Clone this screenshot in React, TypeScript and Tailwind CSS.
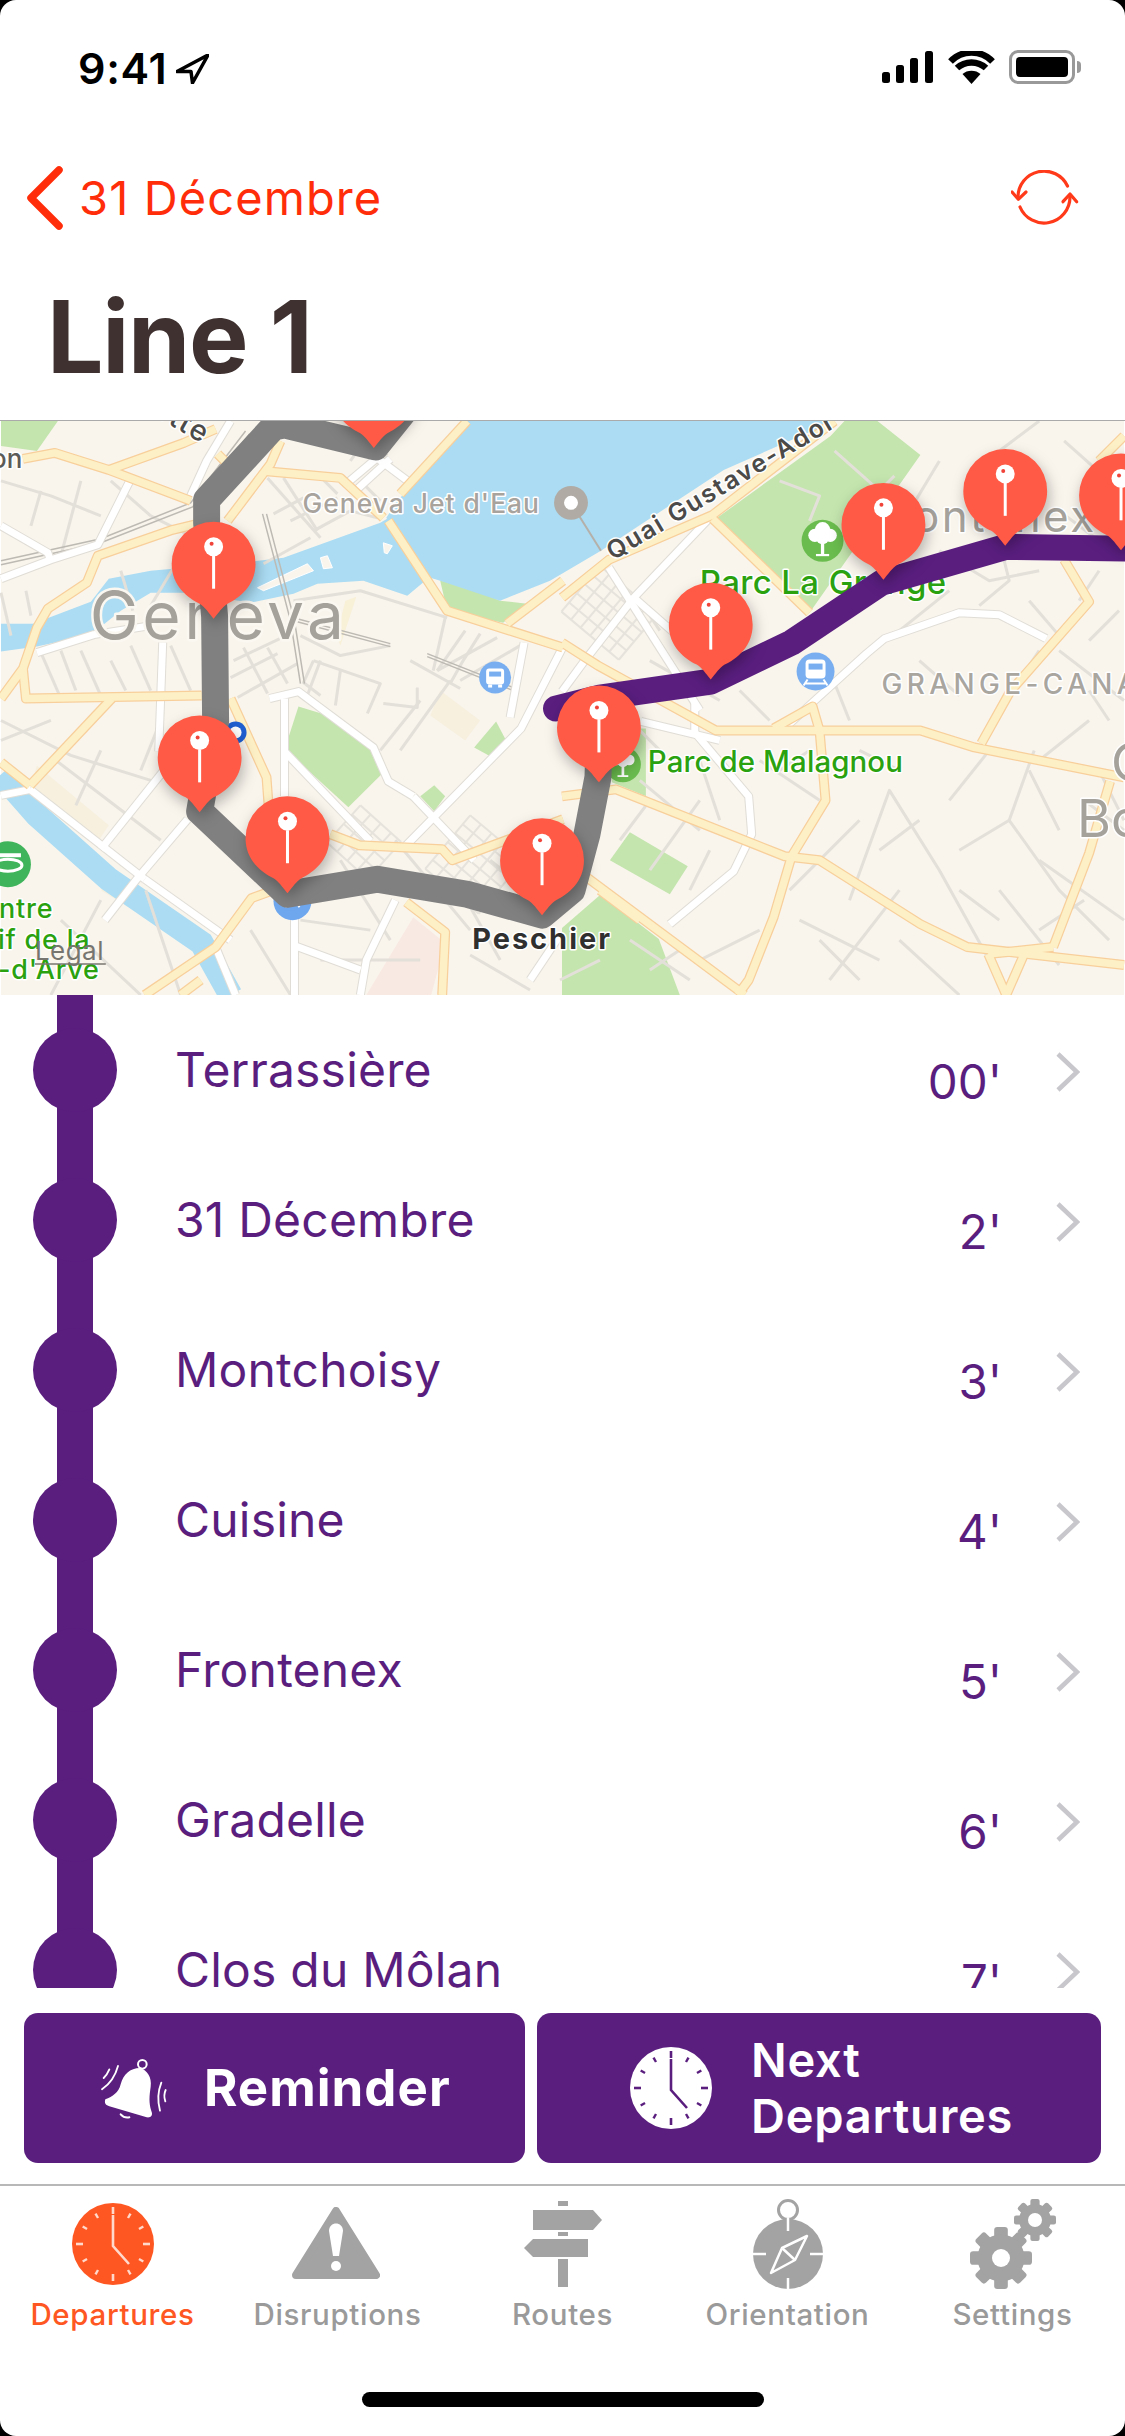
import React from "react";

const PURPLE = "#5a1e7f";
const ORANGE = "#ff5722";
const RED = "#ff2d0a";
const GREY = "#a3a3a3";

const yellowRoads = [
  "22,38 54,32 108,49 190,80", "108,49 183,22 215,8", "217,33 227,43",
  "0,278 22,248 36,207 47,188 86,162 97,135 172,109 201,102",
  "22,248 25,278 201,275", "111,278 29,365", "0,342 29,365",
  "227,100 270,43 280,20", "263,50 340,57 383,97", "388,100 447,190 563,227",
  "400,73 467,0", "507,203 563,160", "230,278 266,357 268,384",
  "330,414 359,425 442,429 452,440 563,399", "144,575 215,527 251,478 273,470",
  "406,482 445,512 442,575", "562,222 598,245 716,310 921,310 975,327 1125,357",
  "562,376 616,369 785,436 820,440 921,504 968,527 1125,545",
  "584,455 745,575", "774,308 813,286 820,310 826,380 792,436 774,497 749,560 738,575",
  "562,177 609,139 713,94 835,0", "713,98 810,192", "982,323 1011,271 1090,181 1065,139",
  "1111,361 1090,433 1054,527", "989,534 1007,575 1025,534", "1125,15 1100,40",
  "600,470 640,500", "200,560 180,575", "1054,527 989,534",
];

const whiteRoads = [
  "0,105 47,132 50,141", "0,158 50,139 97,124 129,60", "36,232 93,214 150,205",
  "269,278 298,271 373,327 388,361 413,376", "284,278 284,376", "284,331 370,421",
  "563,226 521,308 406,425", "524,222 510,297", "29,369 144,459", "100,429 172,339",
  "158,331 162,222", "187,399 136,459 104,500", "294,575 294,489", "413,376 474,440",
  "609,147 700,290", "634,177 706,240", "709,98 634,177 584,241 562,271",
  "1047,218 1000,194 960,192 885,218 867,233 813,282 788,305",
  "695,282 695,312 749,376 752,414 734,451 670,504", "641,301 720,320",
  "230,0 206,40 190,75", "347,62 385,30", "355,70 390,38", "378,38 410,62", "144,459 230,520",
  "395,480 366,540 360,575", "560,515 530,560", "295,526 360,550", "0,375 30,369",
  "215,527 235,575",
];

const greyStreets = [
  "0,60 50,75 100,95", "40,70 30,105", "110,60 150,95", "60,135 80,60", "150,95 190,115",
  "0,172 10,215", "25,170 30,195", "120,150 132,190", "180,135 150,185", "0,300 70,335 150,360",
  "60,230 75,270", "110,240 125,270", "40,232 60,278", "80,230 100,275", "130,225 150,270",
  "170,225 190,270", "0,320 50,300", "55,340 160,420", "100,330 75,385", "160,300 140,350",
  "283,57 317,110", "267,57 320,117", "317,53 337,73", "273,93 303,77", "290,100 337,77", "313,110 350,90 377,97",
  "263,143 310,117", "293,180 360,170 447,197", "313,240 380,263 367,293", "417,267 417,287 383,283",
  "497,217 437,250", "480,213 463,240 450,263", "465,210 437,250", "445,197 433,250", "233,240 290,213",
  "230,257 277,233", "237,277 297,243", "243,227 267,273", "267,227 287,263", "313,240 303,262 320,275", "340,250 335,285",
  "360,60 380,80", "350,40 372,10", "410,240 460,268",
  "300,215 340,235 390,225", "320,240 305,280", "420,280 380,330", "450,260 400,330", "460,260 520,225", "340,440 390,520", "395,420 470,510",
  "455,460 500,540", "300,500 370,510", "320,540 420,540", "470,535 530,570", "490,440 540,480",
  "520,420 560,460", "100,480 50,575", "60,500 140,575", "145,470 180,575", "250,510 290,575",
  "610,280 660,330", "650,240 720,280", "640,360 700,410", "620,420 650,380", "700,380 650,450",
  "690,470 710,430", "630,520 690,560", "700,540 760,510", "790,470 860,400", "800,500 880,540",
  "850,480 890,370 940,450 990,540", "830,560 900,470", "900,520 960,575", "960,430 1010,400 1060,470 1110,520",
  "1010,400 1035,330", "1040,340 1090,300", "990,330 950,380", "920,240 960,275", "1040,230 1000,290",
  "1060,230 1125,280", "1090,270 1110,300", "1000,120 1010,160 980,185", "1080,180 1100,150", "1065,20 1110,60",
  "1040,0 1000,30 1040,50", "1100,80 1125,70", "940,40 910,90", "835,30 880,70 895,55", "880,70 860,120",
  "780,60 820,75 810,100", "690,190 730,240", "640,180 660,210", "740,250 790,225", "740,270 770,300",
  "850,300 830,250", "1040,440 1125,500", "1000,470 1060,545", "1125,410 1085,380", "760,340 820,380",
  "700,340 720,400", "1030,350 1060,410", "1100,350 1125,400", "900,350 860,330", "920,400 880,430", "1000,500 960,470",
  "1040,510 1085,480", "560,560 600,540", "650,550 680,530", "820,520 860,560", "1060,90 1100,120", "940,130 990,160 1040,150",
  "950,170 900,210", "1030,180 1060,215", "1090,220 1120,190", "780,350 810,330",
];

const thinGrid = (x: number, y: number, w: number, h: number, a: number, nx: number, ny: number) => (
  <g transform={`translate(${x} ${y}) rotate(${a})`} stroke="#e6e3dc" strokeWidth="2" fill="none">
    {Array.from({ length: nx + 1 }, (_, i) => (
      <line key={`a${i}`} x1={(i * w) / nx} y1={0} x2={(i * w) / nx} y2={h} />
    ))}
    {Array.from({ length: ny + 1 }, (_, i) => (
      <line key={`b${i}`} x1={0} y1={(i * h) / ny} x2={w} y2={(i * h) / ny} />
    ))}
  </g>
);

const pins: [number, number][] = [
  [373.5, -28], [213, 143], [199, 337], [287, 418], [542, 440], [711, 204], [884, 104], [1006, 70], [1122, 74.5], [599, 307],
];

function Pin({ x, y }: { x: number; y: number }) {
  return (
    <g transform={`translate(${x} ${y})`}>
      <path d="M-42 0A42 42 0 0 1 42 0C42 22 26 34 14 40C9 43 5 49 0 55C-5 49 -9 43 -14 40C-26 34 -42 22 -42 0Z" fill="#ff5a45" style={{ filter: "drop-shadow(2px 6px 7px rgba(0,0,0,0.28))" }} />
      <rect x="-1.5" y="-8" width="3" height="33" fill="#fff" />
      <circle cx="0" cy="-17" r="9.5" fill="#fff" />
      <circle cx="-2" cy="-20" r="2" fill="#f0433a" />
    </g>
  );
}

function Poi({ x, y, r, fill, children }: { x: number; y: number; r: number; fill: string; children?: React.ReactNode }) {
  return (
    <g transform={`translate(${x} ${y})`}>
      <circle r={r} fill={fill} />
      {children}
    </g>
  );
}

const Tree = ({ s = 1 }: { s?: number }) => (
  <g transform={`scale(${s})`} fill="#fff">
    <circle cx="-7" cy="-5" r="6" /><circle cx="7" cy="-5" r="6" /><circle cx="0" cy="-10" r="7" /><circle cx="0" cy="-3" r="6" />
    <rect x="-1.5" y="-4" width="3" height="17" /><rect x="-6" y="12" width="12" height="2" />
  </g>
);

function MapView() {
  const hal = { stroke: "#fff", strokeWidth: 3, paintOrder: "stroke" as const, strokeLinejoin: "round" as const };
  return (
    <svg viewBox="0 0 1125 575" className="block w-full h-full">
      <rect width="1125" height="575" fill="#f9f5ed" />
      {/* land use */}
      <polygon points="100,470 108,459 220,530 215,540" fill="#f7f0df" />
      <polygon points="36,345 108,405 98,420 30,365" fill="#f7f0df" />
      <polygon points="440,270 480,300 465,320 430,295" fill="#f7f0df" />
      <polygon points="345,180 356,176 340,225 336,215" fill="#f9f0d8" />
      <polygon points="366,575 413,497 445,523 431,575" fill="#f9e9e3" />
      {/* parks */}
      <g fill="#c4e5ae">
        <polygon points="0,0 57,0 36,30 0,25" />
        <polygon points="298,286 287,320 287,331 348,387 381,354 373,327 334,297" />
        <polygon points="496,301 474,327 496,339 506,320" />
        <polygon points="434,365 420,376 434,391 445,376" />
        <polygon points="440,160 447,190 503,202 527,183 500,180 460,163" />
        <polygon points="878,0 921,34 810,192 716,98 774,56 831,15 845,0" />
        <polygon points="562,575 680,575 659,519 601,474 562,508" />
        <polygon points="630,412 688,446 670,474 610,440" />
        <polygon points="610,308 646,308 646,376 612,362" />
      </g>
      {/* water */}
      <g fill="#abdcf3">
        <polygon points="467,0 445,30 397,80 386,97 417,153 440,160 500,180 550,160 601,130 724,49 835,0" />
        <polygon points="0,203 32,203 90,181 108,158 150,150 250,141 283,137 380,102 392,95 425,160 407,175 363,160 317,163 293,173 250,182 190,172 150,172 120,190 90,214 36,226 0,231" />
      </g>
      <polyline points="0,354 36,395 108,459 201,523 230,575" fill="none" stroke="#abdcf3" strokeWidth="24" />
      <g fill="#f9f5ed" stroke="#ffffff" strokeWidth="1">
        <polygon points="257,167 307,143 313,150 263,170" />
        <polygon points="320,137 327,135 332,147 323,148" />
        <polygon points="383,122 392,125 387,133 384,132" />
      </g>
      {/* streets */}
      {thinGrid(470, 395, 70, 70, 40, 5, 6)}
      {thinGrid(600, 145, 75, 60, 40, 6, 5)}
      {thinGrid(360, 385, 55, 50, 42, 4, 4)}
      {greyStreets.map((p, i) => (
        <polyline key={i} points={p} fill="none" stroke="#e3e0d9" strokeWidth="3" strokeLinejoin="round" />
      ))}
      <g fill="none" stroke="#bdbab3" strokeWidth="1.5">
        <polyline points="293,197 390,223" />
        <polyline points="293,200 390,226" />
        <polyline points="427,233 513,267" />
        <polyline points="427,236 513,270" />
        <polyline points="262,93 290,200 300,263" />
        <polyline points="266,93 294,200 304,263" />
        <polyline points="0,140 100,118 190,82 245,10" />
        <polyline points="0,144 100,122 192,86 249,13" />
      </g>
      {whiteRoads.map((p, i) => (
        <polyline key={`wo${i}`} points={p} fill="none" stroke="#e0ddd6" strokeWidth="9" strokeLinejoin="round" />
      ))}
      {whiteRoads.map((p, i) => (
        <polyline key={`w${i}`} points={p} fill="none" stroke="#ffffff" strokeWidth="7" strokeLinejoin="round" />
      ))}
      {yellowRoads.map((p, i) => (
        <polyline key={`yo${i}`} points={p} fill="none" stroke="#f8cf9b" strokeWidth="10" strokeLinejoin="round" />
      ))}
      {yellowRoads.map((p, i) => (
        <polyline key={`y${i}`} points={p} fill="none" stroke="#fdf0c6" strokeWidth="7.5" strokeLinejoin="round" />
      ))}
      {/* POIs */}
      <line x1="571" y1="82" x2="601" y2="130" stroke="#b5b1aa" strokeWidth="2" />
      <Poi x={571} y={82} r={17} fill="#b0aca5"><circle r="7" fill="#fff" /></Poi>
      <Poi x={823} y={120} r={21} fill="#6abc4e"><Tree s={1.1} /></Poi>
      <Poi x={623} y={344} r={18} fill="#6abc4e"><Tree s={0.9} /></Poi>
      <Poi x={816} y={251} r={19} fill="#79aff0">
        <rect x="-10" y="-12" width="20" height="19" rx="4" fill="#fff" />
        <rect x="-7" y="-8" width="14" height="6" fill="#79aff0" />
        <path d="M-8 8L-12 14M8 8L12 14M-10 12H10" stroke="#fff" strokeWidth="2" />
      </Poi>
      <Poi x={495} y={257} r={16} fill="#79aff0">
        <rect x="-9" y="-9" width="18" height="16" rx="3" fill="#fff" />
        <rect x="-6" y="-6" width="12" height="5" fill="#79aff0" />
        <rect x="-7" y="7" width="4" height="3" fill="#fff" /><rect x="3" y="7" width="4" height="3" fill="#fff" />
      </Poi>
      <Poi x={292} y={481} r={19} fill="#6fa7ee">
        <path d="M-7 6L0 -6L7 6M-6 -6H6" stroke="#fff" strokeWidth="2" fill="none" />
      </Poi>
      <Poi x={235} y={312} r={11} fill="#1f5fd0"><circle r="6" fill="#fff" /></Poi>
      <Poi x={7} y={444} r={23} fill="#3fb45a">
        <ellipse cx="0" cy="1" rx="14" ry="6" fill="none" stroke="#fff" strokeWidth="3" />
        <rect x="-13" y="-11" width="26" height="4" fill="#fff" />
      </Poi>
      {/* labels */}
      <g fontFamily="Inter, sans-serif">
        <text x="89" y="218" fontSize="66" fill="#a5a19b" letterSpacing="3.4" {...hal} stroke="#fbf8f2" strokeWidth="5">Geneva</text>
        <text x="302" y="92" fontSize="26.5" fontWeight="500" fill="#a8a39c" letterSpacing="1" {...hal}>Geneva Jet d'Eau</text>
        <text x="0" y="0" transform="translate(613 140) rotate(-31)" fontSize="25" fontWeight="600" fill="#4b4a48" letterSpacing="1.9" {...hal}>Quai Gustave-Ador</text>
        <text x="0" y="0" transform="translate(150 -7) rotate(30)" fontSize="29" fontWeight="500" fill="#4b4a48" letterSpacing="2" {...hal}>ette</text>
        <text x="-10" y="47" fontSize="26" fontWeight="500" fill="#5c5b58" {...hal}>on</text>
        <text x="700" y="173" fontSize="33" fontWeight="500" fill="#2aa10f" letterSpacing="0.4" {...hal}>Parc La Grange</text>
        <text x="648" y="352" fontSize="29.5" fontWeight="500" fill="#2aa10f" letterSpacing="0.1" {...hal}>Parc de Malagnou</text>
        <text x="882" y="273" fontSize="28" fontWeight="500" fill="#a9a59f" letterSpacing="4.4" {...hal}>GRANGE-CANAL</text>
        <text x="868" y="111" fontSize="44" fill="#a5a19b" letterSpacing="2.5" {...hal}>Frontenex</text>
        <text x="1078" y="417" fontSize="52" fill="#a5a19b" {...hal}>Bo</text>
        <text x="1112" y="361" fontSize="52" fill="#a5a19b" {...hal}>C</text>
        <text x="472" y="529" fontSize="29" fontWeight="700" fill="#2f2f2f" letterSpacing="2" {...hal}>Peschier</text>
        <text x="-2" y="498" fontSize="27" fontWeight="500" fill="#2aa10f" letterSpacing="0.8" {...hal}>ntre</text>
        <text x="-3" y="529" fontSize="27" fontWeight="500" fill="#2aa10f" letterSpacing="0.8" {...hal}>if de la</text>
        <text x="-3" y="559" fontSize="27" fontWeight="500" fill="#2aa10f" letterSpacing="0.8" {...hal}>-d'Arve</text>
        <text x="34" y="540" fontSize="26" fill="#77756f" letterSpacing="0.5">Legal</text>
        <line x1="34" y1="544" x2="105" y2="544" stroke="#77756f" strokeWidth="1.5" />
      </g>
      {/* routes */}
      <polyline points="404,-10 375,26 284,4 273,6 206,79 206,102 214,196 215,301 199,391 287,474 377,459 467,474 542,495 572,470 587,414 598,357 600,300" fill="none" stroke="#808080" strokeWidth="27" strokeLinejoin="round" />
      <polyline points="556,288 600,277 711,261 792,222 882,162 1007,126 1135,128" fill="none" stroke={PURPLE} strokeWidth="26" strokeLinejoin="round" strokeLinecap="round" />
      {pins.map(([x, y], i) => (
        <Pin key={i} x={x} y={y} />
      ))}
    </svg>
  );
}

function ClockIcon({ bg, fg, size = 84 }: { bg: string; fg: string; size?: number }) {
  return (
    <svg viewBox="-42 -42 84 84" width={size} height={size}>
      <circle r="41" fill={bg} />
      {Array.from({ length: 12 }, (_, i) => (
        <line key={i} x1="0" y1={i % 3 === 0 ? -37 : -35} x2="0" y2={-30} stroke={fg} strokeWidth={i % 3 === 0 ? 2.6 : 2.4} transform={`rotate(${i * 30})`} />
      ))}
      <polyline points="0,-29 0,2 16,20" fill="none" stroke={fg} strokeWidth="2.6" />
    </svg>
  );
}

const Gear = ({ cx, cy, r, hole }: { cx: number; cy: number; r: number; hole: number }) => (
  <g transform={`translate(${cx} ${cy})`}>
    {Array.from({ length: 8 }, (_, i) => (
      <rect key={i} x={-r * 0.22} y={-r} width={r * 0.44} height={r * 0.4} rx={r * 0.1} fill={GREY} transform={`rotate(${i * 45})`} />
    ))}
    <circle r={r * 0.76} fill={GREY} />
    <circle r={hole} fill="#fff" />
  </g>
);

function Tab({ label, active, children }: { label: string; active?: boolean; children: React.ReactNode }) {
  return (
    <div className="flex flex-col items-center">
      <div className="h-[92px] w-full flex items-center justify-center">{children}</div>
      <div className={`mt-[6px] text-[29.5px] leading-[36px] font-medium tracking-[0.65px] ${active ? "text-[#ff5722]" : "text-[#9a9a9a]"}`}>{label}</div>
    </div>
  );
}

const stops = [
  ["Terrassière", "00'"],
  ["31 Décembre", "2'"],
  ["Montchoisy", "3'"],
  ["Cuisine", "4'"],
  ["Frontenex", "5'"],
  ["Gradelle", "6'"],
  ["Clos du Môlan", "7'"],
];

export default function App() {
  return (
    <div className="w-[1125px] h-[2436px] bg-black overflow-hidden [font-family:Inter,sans-serif]">
      <div className="w-full h-full bg-white rounded-[16px] overflow-hidden flex flex-col">
        {/* status bar */}
        <div className="h-[142px] flex items-start justify-between pt-[46px] pl-[78px] pr-[44px]">
          <div className="flex items-center h-[44px] gap-[9px]">
            <span className="text-[43px] leading-[44px] font-semibold text-black tracking-[0.7px]">9:41</span>
            <svg width="33" height="30" viewBox="0 0 33 30" className="mt-[2px]">
              <path d="M32 1L1 17.5L15 17.5L16.5 29Z" fill="#fff" stroke="#000" strokeWidth="3.5" strokeLinejoin="round" />
            </svg>
          </div>
          <div className="flex items-center h-[44px] mt-[-1px]">
            <svg width="51" height="32" viewBox="0 0 51 32" fill="#000">
              <rect x="0" y="21" width="8" height="11" rx="2.5" />
              <rect x="14" y="14" width="8" height="18" rx="2.5" />
              <rect x="28" y="7" width="8" height="25" rx="2.5" />
              <rect x="43" y="0" width="8" height="32" rx="2.5" />
            </svg>
            <svg width="47" height="33" viewBox="0 0 47 33" className="ml-[15px]">
              <path d="M23.5 33L14.5 23C19 18.5 28 18.5 32.5 23Z" fill="#000" />
              <path d="M9 17C17 9.5 30 9.5 38 17" fill="none" stroke="#000" strokeWidth="6.5" />
              <path d="M2.5 10.5C14 -1.5 33 -1.5 44.5 10.5" fill="none" stroke="#000" strokeWidth="6.5" />
            </svg>
            <div className="ml-[14px] w-[66px] h-[34px] rounded-[9px] border-[3px] border-[#999] p-[4px]">
              <div className="w-full h-full rounded-[4px] bg-black" />
            </div>
            <div className="w-[4px] h-[12px] rounded-r-full bg-[#999] ml-[2px]" />
          </div>
        </div>
        {/* nav */}
        <div className="h-[112px] flex items-center justify-between pl-[26px] pr-[44px]">
          <div className="flex items-center gap-[16px]">
            <svg width="37" height="64" viewBox="0 0 37 64">
              <polyline points="33,4 5,32 33,60" fill="none" stroke={RED} strokeWidth="7.5" strokeLinecap="round" strokeLinejoin="round" />
            </svg>
            <span className="text-[47px] leading-[60px] text-[#ff2d0a] tracking-[1.1px]">31 Décembre</span>
          </div>
          <svg width="70" height="56" viewBox="0 0 70 56" fill="none" stroke="#ff3a1a" strokeWidth="3.2" strokeLinecap="round" strokeLinejoin="round">
            <path d="M7 27A26 26 0 0 1 56.5 16" />
            <path d="M9 37A26 26 0 0 0 59 27" />
            <path d="M1 22L7.3 29.3L15 22" />
            <path d="M52 31.7L59 24L65.7 31.7" />
          </svg>
        </div>
        {/* title */}
        <div className="h-[166px] flex items-center pl-[47px]">
          <h1 className="text-[100px] leading-[120px] font-bold text-[#3e3130] tracking-[-1.3px]">Line 1</h1>
        </div>
        {/* map */}
        <div className="h-[575px] border-t-[1px] border-[#aaaaaa] overflow-hidden shrink-0">
          <MapView />
        </div>
        {/* list */}
        <div className="h-[993px] overflow-hidden shrink-0">
          {stops.map(([name, time]) => (
            <div key={name} className="h-[150px] flex items-center">
              <div className="ml-[33px] w-[84px] h-full grid place-items-center shrink-0">
                <div className="[grid-area:1/1] w-[36px] h-full bg-[#5a1e7f]" />
                <div className="[grid-area:1/1] w-[84px] h-[84px] rounded-full bg-[#5a1e7f]" />
              </div>
              <div className="ml-[58px] flex-1 text-[48px] leading-[60px] text-[#5a1e7f] tracking-[0.2px]">{name}</div>
              <div className="mt-[24px] text-[47.5px] leading-[60px] text-[#5a1e7f]">{time}</div>
              <svg width="24" height="40" viewBox="0 0 24 40" className="ml-[54px] mr-[45px] mt-[3px] shrink-0">
                <polyline points="2,2 21,20 2,38" fill="none" stroke="#c7c7cc" strokeWidth="4.5" />
              </svg>
            </div>
          ))}
        </div>
        {/* buttons */}
        <div className="pt-[25px] pl-[24px] flex gap-[12px] h-[198px] shrink-0 border-b-[2px] border-[#b8b8b8]">
          <div className="w-[501px] h-[150px] rounded-[14px] bg-[#5a1e7f] flex items-center pl-[66px]">
            <svg width="90" height="85" viewBox="0 0 270 255" fill="none">
              <circle cx="157" cy="55" r="13" stroke="#fff" strokeWidth="6" />
              <path d="M150 66C120 66 100 85 92 115C86 140 68 152 46 160C42 172 48 178 58 181L170 214C182 216 190 208 184 195C176 170 178 150 182 122C186 95 172 72 150 66Z" fill="#fff" />
              <path d="M92 205C98 212 108 216 118 214" stroke="#fff" strokeWidth="6" strokeLinecap="round" />
              <g stroke="#fff" strokeWidth="5.5" strokeLinecap="round">
                <path d="M58 70C54 80 49 88 41 96" />
                <path d="M84 60C76 90 62 112 36 130" />
                <path d="M214 110C204 135 202 165 210 194" />
                <path d="M227 132C222 143 222 155 226 166" />
              </g>
            </svg>
            <span className="ml-[24px] text-[51px] leading-[60px] font-bold text-white tracking-[1px]">Reminder</span>
          </div>
          <div className="w-[564px] h-[150px] rounded-[14px] bg-[#5a1e7f] flex items-center pl-[92px]">
            <ClockIcon bg="#ffffff" fg="#5a1e7f" />
            <span className="ml-[38px] text-[47px] leading-[56px] font-semibold text-white tracking-[0.75px]">
              Next
              <br />
              Departures
            </span>
          </div>
        </div>
        {/* tabs */}
        <div className="grid grid-cols-5 pt-[12px]">
          <Tab label="Departures" active>
            <ClockIcon bg={ORANGE} fg="#ffd9cc" />
          </Tab>
          <Tab label="Disruptions">
            <svg width="88" height="74" viewBox="0 0 88 74" className="ml-[-4px]">
              <path d="M44 4L84 68H4Z" fill={GREY} stroke={GREY} strokeWidth="8" strokeLinejoin="round" />
              <path d="M37 24C37 14 51 14 51 24L47 49H41Z" fill="#fff" />
              <circle cx="44" cy="59" r="5" fill="#fff" />
            </svg>
          </Tab>
          <Tab label="Routes">
            <svg width="80" height="86" viewBox="0 0 80 86" fill={GREY}>
              <rect x="35" y="0" width="10" height="5" />
              <path d="M10 9H70L79 19L70 29H10Z" />
              <rect x="35" y="31" width="10" height="4" />
              <path d="M10 38H65V56H10L1 47Z" />
              <rect x="35" y="58" width="10" height="28" />
            </svg>
          </Tab>
          <Tab label="Orientation">
            <svg width="72" height="92" viewBox="0 0 72 92" fill="none">
              <circle cx="36" cy="12" r="9.5" stroke={GREY} strokeWidth="3" />
              <circle cx="36" cy="56" r="35" fill={GREY} />
              <g stroke="#fff" strokeWidth="2.5">
                <line x1="36" y1="20" x2="36" y2="33" />
                <line x1="36" y1="80" x2="36" y2="91" />
                <line x1="1" y1="56" x2="14" y2="56" />
                <line x1="58" y1="56" x2="71" y2="56" />
                <path d="M55 38L43 62L19 75L30 50Z" strokeLinejoin="round" />
                <line x1="30" y1="50" x2="43" y2="62" />
              </g>
            </svg>
          </Tab>
          <Tab label="Settings">
            <svg width="86" height="92" viewBox="0 0 86 92">
              <Gear cx={31} cy={60} r={31} hole={9} />
              <Gear cx={65} cy={22} r={21} hole={7} />
            </svg>
          </Tab>
        </div>
        {/* home indicator */}
        <div className="flex-1 flex justify-center">
          <div className="mt-[60px] w-[402px] h-[15px] rounded-full bg-black" />
        </div>
      </div>
    </div>
  );
}
